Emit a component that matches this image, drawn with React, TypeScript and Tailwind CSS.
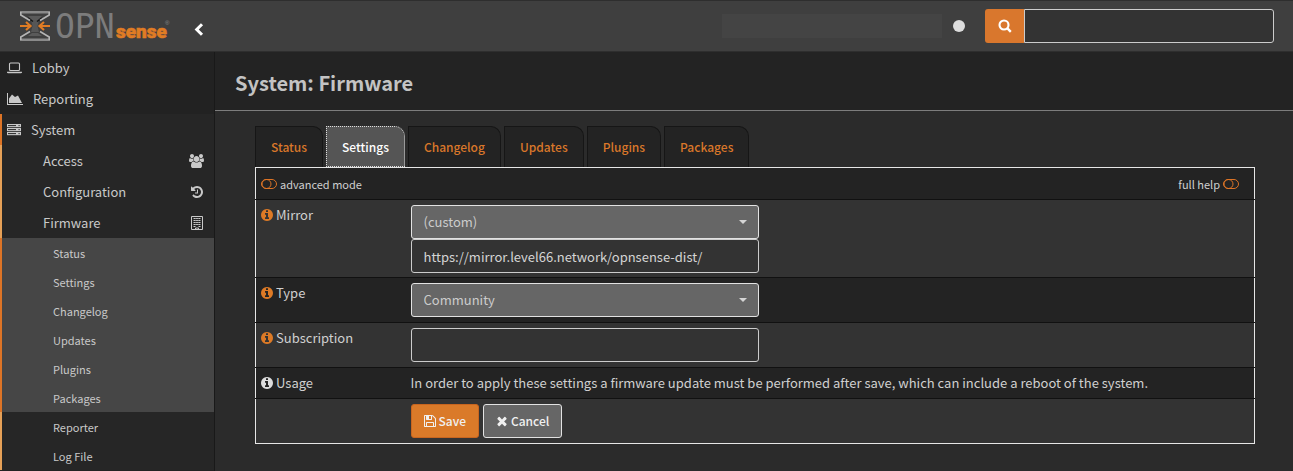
import type { ReactNode } from "react";

type IconProps = { className?: string };

function Glyph({ d, className }: { d: string; className?: string }) {
  return (
    <svg viewBox="0 0 1792 1792" fill="currentColor" aria-hidden="true" className={className}>
      <path d={d} />
    </svg>
  );
}

const INFO =
  "M1152 1376v-160q0-14-9-23t-23-9h-96v-512q0-14-9-23t-23-9h-320q-14 0-23 9t-9 23v160q0 14 9 23t23 9h96v320h-96q-14 0-23 9t-9 23v160q0 14 9 23t23 9h448q14 0 23-9t9-23zm-128-896v-160q0-14-9-23t-23-9h-192q-14 0-23 9t-9 23v160q0 14 9 23t23 9h192q14 0 23-9t9-23zm640 416q0 209-103 385.5t-279.5 279.5-385.5 103-385.5-103-279.5-279.5-103-385.5 103-385.5 279.5-279.5 385.5-103 385.5 103 279.5 279.5 103 385.5z";
const TIMES =
  "M1490 1322q0 40-28 68l-136 136q-28 28-68 28t-68-28l-294-294-294 294q-28 28-68 28t-68-28l-136-136q-28-28-28-68t28-68l294-294-294-294q-28-28-28-68t28-68l136-136q28-28 68-28t68 28l294 294 294-294q28-28 68-28t68 28l136 136q28 28 28 68t-28 68l-294 294 294 294q28 28 28 68z";
const FLOPPY =
  "M512 1536h768v-384h-768v384zm896 0h128v-896q0-14-10-38.5t-20-34.5l-281-281q-10-10-34-20t-39-10v416q0 40-28 68t-68 28h-576q-40 0-68-28t-28-68v-416h-128v1280h128v-416q0-40 28-68t68-28h832q40 0 68 28t28 68v416zm-384-928v-320q0-13-9.5-22.5t-22.5-9.5h-192q-13 0-22.5 9.5t-9.5 22.5v320q0 13 9.5 22.5t22.5 9.5h192q13 0 22.5-9.5t9.5-22.5zm640 32v928q0 40-28 68t-68 28h-1344q-40 0-68-28t-28-68v-1344q0-40 28-68t68-28h928q40 0 88 20t76 48l280 280q28 28 48 76t20 88z";
const HISTORY =
  "M1664 896q0 156-61 298t-164 245-245 164-298 61q-172 0-327-72.5t-264-204.5q-7-10-6.5-22.5t8.5-20.5l137-138q10-9 25-9 16 2 23 12 73 95 179 147t225 52q104 0 198.5-40.5t163.5-109.5 109.5-163.5 40.5-198.5-40.5-198.5-109.5-163.5-163.5-109.5-198.5-40.5q-98 0-188 35.5t-160 101.5l137 138q31 30 14 69-17 40-59 40h-448q-26 0-45-19t-19-45v-448q0-42 40-59 39-17 69 14l130 129q107-101 244.5-156.5t284.5-55.5q156 0 298 61t245 164 164 245 61 298zm-640-288v448q0 14-9 23t-23 9h-320q-14 0-23-9t-9-23v-64q0-14 9-23t23-9h224v-352q0-14 9-23t23-9h64q14 0 23 9t9 23z";
const USERS =
  "M529 896q-162 5-265 128h-134q-82 0-138-40.5t-56-118.5q0-353 124-353 6 0 43.5 21t97.5 42.5 119 21.5q67 0 133-23-5 37-5 66 0 139 81 256zm1071 637q0 120-73 189.5t-194 69.5h-874q-121 0-194-69.5t-73-189.5q0-53 3.5-103.5t14-109 26.5-108.5 43-97.5 62-81 85.5-53.5 111.5-20q10 0 43 21.5t73 48 107 48 135 21.5 135-21.5 107-48 73-48 43-21.5q61 0 111.5 20t85.5 53.5 62 81 43 97.5 26.5 108.5 14 109 3.5 103.5zm-1024-1277q0 106-75 181t-181 75-181-75-75-181 75-181 181-75 181 75 75 181zm704 384q0 159-112.5 271.5t-271.5 112.5-271.5-112.5-112.5-271.5 112.5-271.5 271.5-112.5 271.5 112.5 112.5 271.5zm576 225q0 78-56 118.5t-138 40.5h-134q-103-123-265-128 81-117 81-256 0-29-5-66 66 23 133 23 59 0 119-21.5t97.5-42.5 43.5-21q124 0 124 353zm-128-609q0 106-75 181t-181 75-181-75-75-181 75-181 181-75 181 75 75 181z";

function UsersIcon({ className }: IconProps) {
  return (
    <svg viewBox="-64 0 1920 1792" fill="currentColor" aria-hidden="true" className={className}>
      <path d={USERS} />
    </svg>
  );
}

function LaptopIcon({ className }: IconProps) {
  return (
    <svg viewBox="0 0 15 12" aria-hidden="true" className={className}>
      <rect x="2.5" y="1" width="10" height="7.5" rx="1" fill="none" stroke="currentColor" strokeWidth="1.1" />
      <path d="M0 9.8h15v.6q0 .8-1.2.8H1.2Q0 11.2 0 10.4z" fill="currentColor" />
    </svg>
  );
}

function AreaChartIcon({ className }: IconProps) {
  return (
    <svg viewBox="0 0 16 12" fill="currentColor" aria-hidden="true" className={className}>
      <path d="M0 0h1v11h15v1H0z" />
      <path d="M2 10V5.500L5 1.500l3 2.500 3-1.500 4 7.500z" />
    </svg>
  );
}

function ServerIcon({ className }: IconProps) {
  return (
    <svg viewBox="0 0 14 12" aria-hidden="true" className={className}>
      {[0, 4, 8].map((y) => (
        <g key={y}>
          <rect x="0" y={y} width="14" height="3.2" fill="currentColor" />
          <rect x="1" y={y + 1.1} width="8" height="1" fill="#262626" />
          <rect x="11.5" y={y + 1.1} width="1.2" height="1" fill="#262626" />
        </g>
      ))}
    </svg>
  );
}

function BuildingIcon({ className }: IconProps) {
  return (
    <svg viewBox="0 0 12 14" aria-hidden="true" className={className}>
      <path d="M.5.5h11v13h-11z" fill="none" stroke="currentColor" />
      <path d="M2.500 2.500h7M2.500 4.500h7M2.500 6.500h7M2.500 8.500h7" stroke="currentColor" strokeDasharray="1.6 .2" />
      <path d="M2.500 10.500h2M7.500 10.500h2" stroke="currentColor" />
      <path d="M4.500 13.500v-1.500h3v1.500" fill="none" stroke="currentColor" />
    </svg>
  );
}

function ToggleIcon({ className }: IconProps) {
  return (
    <svg viewBox="0 0 16 10" fill="none" stroke="currentColor" aria-hidden="true" className={className}>
      <rect x=".5" y=".5" width="15" height="9" rx="4.5" />
      <circle cx="5.5" cy="5" r="4.5" />
    </svg>
  );
}

function Logo() {
  return (
    <svg viewBox="0 0 152 32" className="h-8 w-38 shrink-0 overflow-visible" role="img" aria-label="OPNsense">
      <g fill="none">
        <path d="M8 6h14l-4 4h-6z" fill="#5a5a5a" />
        <path d="M11 10h8l-1.500 6 1.500 6h-8l1.500-6z" fill="#565656" />
        <path d="M8 26h14l-4-3h-6z" fill="#5a5a5a" />
        <path d="M8 8l5 3.500M22 8l-5 3.500" stroke="#151515" strokeWidth="1.5" />
        <path d="M0 2.300h30M0 29.800h30" stroke="#8a8a8a" strokeWidth="2.6" />
        <path d="M.8 2v3l9.200 5.500M29.200 2v3l-9.200 5.500M.8 30v-3l9.200-5.500M29.200 30v-3l-9.200-5.500" stroke="#b5b5b5" strokeWidth="1.6" />
        <path d="M0 16h10M6 12l4.500 4-4.500 4M30 16h-10M24 12l-4.500 4 4.500 4" stroke="#e07c24" strokeWidth="2.2" />
      </g>
      <text x="35" y="28" fontSize="33" fill="#7c7c7c" className="font-['DejaVu_Sans_Mono',monospace]">
        OPN
      </text>
      <text
        x="96"
        y="28"
        fontSize="19"
        fill="#e07c24"
        stroke="#e07c24"
        strokeWidth="0.6"
        className="font-[Roboto,sans-serif] font-black"
      >
        sense
      </text>
      <text x="145" y="15" fontSize="6" fill="#8a8a8a" className="font-['Liberation_Sans',sans-serif]">
        ®
      </text>
    </svg>
  );
}

const firmwarePages = ["Status", "Settings", "Changelog", "Updates", "Plugins", "Packages"];

function Sidebar() {
  const top = "flex h-[31px] items-center pl-[7px]";
  const sub = "flex h-[31px] items-center justify-between pl-[41px] pr-2.5";
  const leaf = "flex h-[29px] items-center pl-[51px] text-[11px]";
  return (
    <nav className="w-[215px] shrink-0 border-r border-[#191919] bg-[#222222] text-[#c9c9c9]">
      <a href="#lobby" className={top}>
        <LaptopIcon className="mr-2.5 h-3 w-[15px]" />
        Lobby
      </a>
      <a href="#reporting" className={top}>
        <AreaChartIcon className="mr-2.5 h-3 w-4" />
        Reporting
      </a>
      <div className="bg-[#262626]">
        <a href="#system" className="flex h-[31px] items-center border-l-2 border-[#dd7426] pl-[5px]">
          <ServerIcon className="mr-2.5 h-3 w-3.5" />
          System
        </a>
        <div className="border-l-2 border-[#e5a057]">
          <a href="#access" className={sub}>
            Access
            <UsersIcon className="h-3.5 w-[15px]" />
          </a>
          <a href="#configuration" className={sub}>
            Configuration
            <Glyph d={HISTORY} className="size-3.5" />
          </a>
          <a href="#firmware" className={sub}>
            Firmware
            <BuildingIcon className="mr-px h-3.5 w-3" />
          </a>
        </div>
        <div className="border-l-2 border-[#dd7426] bg-[#464646]">
          {firmwarePages.map((page) => (
            <a key={page} href={`#${page}`} className={leaf}>
              {page}
            </a>
          ))}
        </div>
        <div className="border-l-2 border-[#e5a057]">
          <a href="#reporter" className={leaf}>
            Reporter
          </a>
          <a href="#logfile" className={leaf}>
            Log File
          </a>
        </div>
      </div>
    </nav>
  );
}

function Header() {
  return (
    <header className="flex h-13 items-center border-y border-[#2e2e2e] bg-[#3f3f3f] pl-5 pr-[19px]">
      <Logo />
      <button type="button" aria-label="Collapse menu" className="ml-[22px] mt-1.5 text-white">
        <svg viewBox="0 0 10 13" fill="none" stroke="currentColor" strokeWidth="3" className="h-[13px] w-2.5">
          <path d="M8 1.200L2.700 6.500L8 11.800" />
        </svg>
      </button>
      <div className="ml-auto h-6 w-[220px] bg-[#444444]" />
      <span className="ml-[11px] size-3 rounded-full bg-[#dddddd]" />
      <form className="ml-5 flex w-[289px]">
        <button
          type="button"
          aria-label="Search"
          className="flex h-[34px] w-[39px] items-center justify-center rounded-l-[3px] bg-[#d9772d] text-white"
        >
          <svg viewBox="0 0 14 14" fill="none" stroke="currentColor" className="size-3.5">
            <circle cx="6" cy="6" r="4.5" strokeWidth="2.1" />
            <path d="M9.200 9.200l3.600 3.600" strokeWidth="2.4" />
          </svg>
        </button>
        <input
          type="text"
          aria-label="Search pages"
          className="h-[34px] min-w-0 flex-1 rounded-r-[3px] border border-[#cccccc] bg-[#333333] px-3 text-[#dddddd] outline-none"
        />
      </form>
    </header>
  );
}

type RowProps = {
  label?: string;
  htmlFor?: string;
  children: ReactNode;
  shade: string;
  info?: string;
  bottom?: string;
};

function Row({ label, htmlFor, children, shade, info = "text-[#dd7a26]", bottom = "pb-[5px]" }: RowProps) {
  return (
    <tr className={`border-t border-[#111111] ${shade}`}>
      <th scope="row" className="px-[5px] pt-[5px] text-left align-top font-normal">
        {label && (
          <label htmlFor={htmlFor} className="flex h-5 items-center gap-0.5">
            <Glyph d={INFO} className={`-ml-px size-3.5 ${info}`} />
            {label}
          </label>
        )}
      </th>
      <td className={`px-[5px] pt-[5px] align-top ${bottom}`}>{children}</td>
    </tr>
  );
}

function Select({ id, value }: { id: string; value: string }) {
  return (
    <div className="relative w-[348px]">
      <select
        id={id}
        defaultValue={value}
        className="block h-[34px] w-full appearance-none rounded-[3px] border border-[#e2e2e2] bg-[#666666] px-3 text-[#cccccc]"
      >
        <option>{value}</option>
      </select>
      <svg viewBox="0 0 8 4" className="pointer-events-none absolute right-3 top-[15px] h-1 w-2 fill-[#d5d5d5]">
        <path d="M0 0h8L4 4z" />
      </svg>
    </div>
  );
}

const field =
  "block h-[34px] w-[348px] rounded-[3px] border border-[#cccccc] bg-[#333333] px-3 text-[#d5d5d5] outline-none";

function Settings() {
  return (
    <table className="w-full table-fixed border-collapse border border-[#e6e6e6] text-[#d0d0d0]">
      <colgroup>
        <col className="w-[150px]" />
        <col />
      </colgroup>
      <tbody>
        <tr className="bg-[#232323]">
          <td colSpan={2} className="h-8 px-[5px] pt-px text-[11px]">
            <div className="flex items-center justify-between">
              <button type="button" className="flex items-center gap-[3px]">
                <ToggleIcon className="h-2.5 w-4 text-[#dd7426]" />
                advanced mode
              </button>
              <button type="button" className="mr-2.5 flex items-center gap-[3px]">
                full help
                <ToggleIcon className="h-2.5 w-4 text-[#dd7426]" />
              </button>
            </div>
          </td>
        </tr>
        <Row label="Mirror" htmlFor="mirror" shade="bg-[#333333]" bottom="pb-1">
          <Select id="mirror" value="(custom)" />
          <input
            type="text"
            aria-label="Mirror address"
            defaultValue="https://mirror.level66.network/opnsense-dist/"
            className={field}
          />
        </Row>
        <Row label="Type" htmlFor="type" shade="bg-[#232323]">
          <Select id="type" value="Community" />
        </Row>
        <Row label="Subscription" htmlFor="subscription" shade="bg-[#333333]">
          <input id="subscription" type="text" className={field} />
        </Row>
        <Row label="Usage" shade="bg-[#232323]" info="text-[#dddddd]">
          <p className="leading-5">
            In order to apply these settings a firmware update must be performed after save, which can include a reboot
            of the system.
          </p>
        </Row>
        <Row shade="bg-[#333333]">
          <div className="flex gap-1 text-xs leading-5 font-medium text-[#f0f0f0]">
            <button
              type="button"
              className="flex h-[34px] items-center gap-0.5 rounded-[3px] border border-[#c8651f] bg-[#da7a29] px-3"
            >
              <Glyph d={FLOPPY} className="-ml-px size-3.5" />
              Save
            </button>
            <button
              type="button"
              className="flex h-[34px] items-center gap-0.5 rounded-[3px] border border-[#e2e2e2] bg-[#666666] px-3"
            >
              <Glyph d={TIMES} className="-ml-px size-3.5" />
              Cancel
            </button>
          </div>
        </Row>
      </tbody>
    </table>
  );
}

export default function App() {
  return (
    <div className="flex min-h-screen flex-col bg-[#2b2b2b] font-['Noto_Sans_CJK_SC','Noto_Sans',sans-serif] text-[13px] leading-5">
      <Header />
      <div className="flex flex-1">
        <Sidebar />
        <main className="min-w-0 flex-1">
          <div className="border-b border-[#7d7d7d] bg-[#232323] px-5 pt-[18px] pb-3.5">
            <h1 className="text-xl leading-[26px] font-bold text-[#c3c3c3]">System: Firmware</h1>
          </div>
          <div className="pl-10 pr-[38px] pt-[15px]">
            <div role="tablist" className="flex gap-[3px] text-xs font-medium">
              {firmwarePages.map((page) => (
                <button
                  key={page}
                  type="button"
                  role="tab"
                  aria-selected={page === "Settings"}
                  className={
                    page === "Settings"
                      ? "h-[41px] rounded-tr-[10px] border border-dotted border-[#dddddd] bg-[#555555] px-[15px] text-white"
                      : "h-[41px] rounded-tr-[10px] border border-b-0 border-[#161616] bg-[#232323] px-[15px] text-[#d9772a]"
                  }
                >
                  {page}
                </button>
              ))}
            </div>
            <Settings />
          </div>
        </main>
      </div>
    </div>
  );
}
